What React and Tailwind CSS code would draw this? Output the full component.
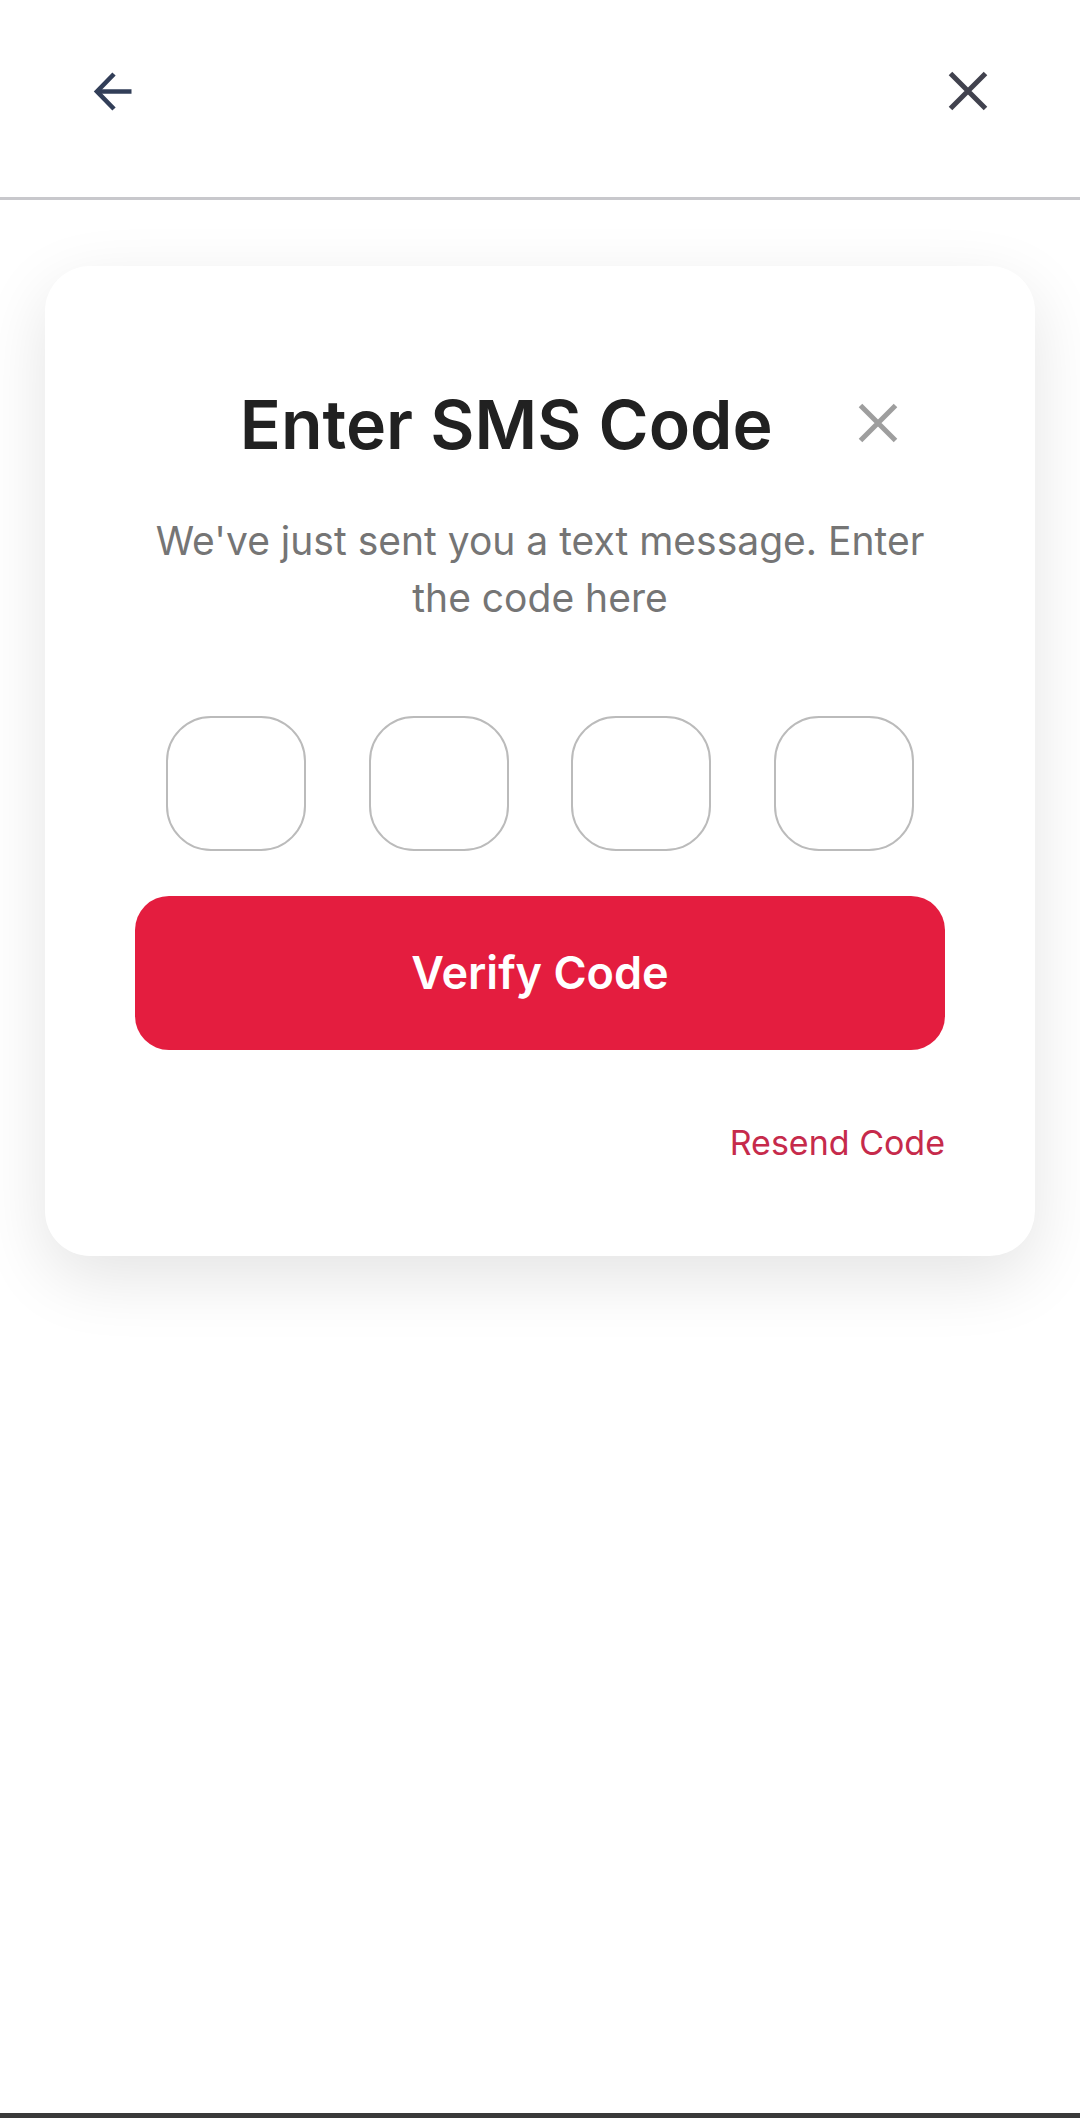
import { useState } from "react";

function ArrowIcon() {
    return (
        <svg viewBox="0 0 40 40" className="w-10 h-10" fill="none" stroke="currentColor" strokeWidth="4.6">
            <path d="M39.5 20.5H5" />
            <path d="M22 3L5 20.5L22 38" />
        </svg>
    )
}

function CloseIcon() {
    return (
        <svg viewBox="0 0 40 40" className="w-10 h-10" fill="none" stroke="currentColor" strokeWidth="5">
            <path d="M2.5 2.5L37.5 37.5M37.5 2.5L2.5 37.5" />
        </svg>
    )
}

function CodeInput({ value, index, onChange }) {
    return (
        <input
            type="text"
            inputMode="numeric"
            maxLength={1}
            aria-label={`Digit ${index + 1}`}
            value={value}
            onChange={(e) => onChange(index, e.target.value)}
            className="w-[140px] h-[135px] rounded-[45px] border-2 border-[#bbbbbb] bg-white text-center text-[45px] text-[#212121]"
        />
    )
}

export default function App() {
    const [code, setCode] = useState(["", "", "", ""])

    const handleChange = (index, value) => {
        setCode(code.map((digit, i) => (i === index ? value : digit)))
    }

    return (
        <div className="min-h-screen flex flex-col bg-white font-['Inter',sans-serif]">
            {/* Top bar */}
            <header className="flex items-center justify-between h-[200px] px-[92px] pb-4 border-b-3 border-[#c8c8cc]">
                <button type="button" aria-label="Back" className="text-[#323e58]">
                    <ArrowIcon />
                </button>
                <button type="button" aria-label="Close" className="text-[#41424e]">
                    <CloseIcon />
                </button>
            </header>

            <main className="flex-1 px-[45px] pt-[66px]">
                <form
                    onSubmit={(e) => e.preventDefault()}
                    className="px-[90px] pt-28 pb-[89px] rounded-[45px] bg-white shadow-[0_22px_68px_rgba(0,0,0,0.11)]"
                >
                    {/* Title */}
                    <div className="grid grid-cols-12 items-center">
                        <h1 className="col-start-2 col-span-9 pt-0.5 text-center text-[68px] leading-[88px] font-semibold text-[#212121] whitespace-nowrap">
                            Enter SMS Code
                        </h1>
                        <button type="button" aria-label="Dismiss" className="col-span-2 flex justify-center text-[#9e9e9e]">
                            <CloseIcon />
                        </button>
                    </div>

                    <p className="mt-11 text-center text-[39px] leading-[57px] text-[#757575]">
                        We've just sent you a text message. Enter the code here
                    </p>

                    {/* Code digits */}
                    <div className="grid grid-cols-4 justify-items-center mt-[90px]">
                        {code.map((digit, i) => (
                            <CodeInput key={i} index={i} value={digit} onChange={handleChange} />
                        ))}
                    </div>

                    <button type="submit" className="w-full h-[154px] mt-[45px] rounded-[34px] bg-[#e41d3f] text-[45px] font-semibold text-white">
                        Verify Code
                    </button>

                    <div className="flex justify-end mt-[69px]">
                        <a href="#resend" className="text-[34px] leading-[48px] text-[#c62a4b]">
                            Resend Code
                        </a>
                    </div>
                </form>
            </main>

            <div className="h-[5px] bg-[#3a3a3a]"></div>
        </div>
    )
}
